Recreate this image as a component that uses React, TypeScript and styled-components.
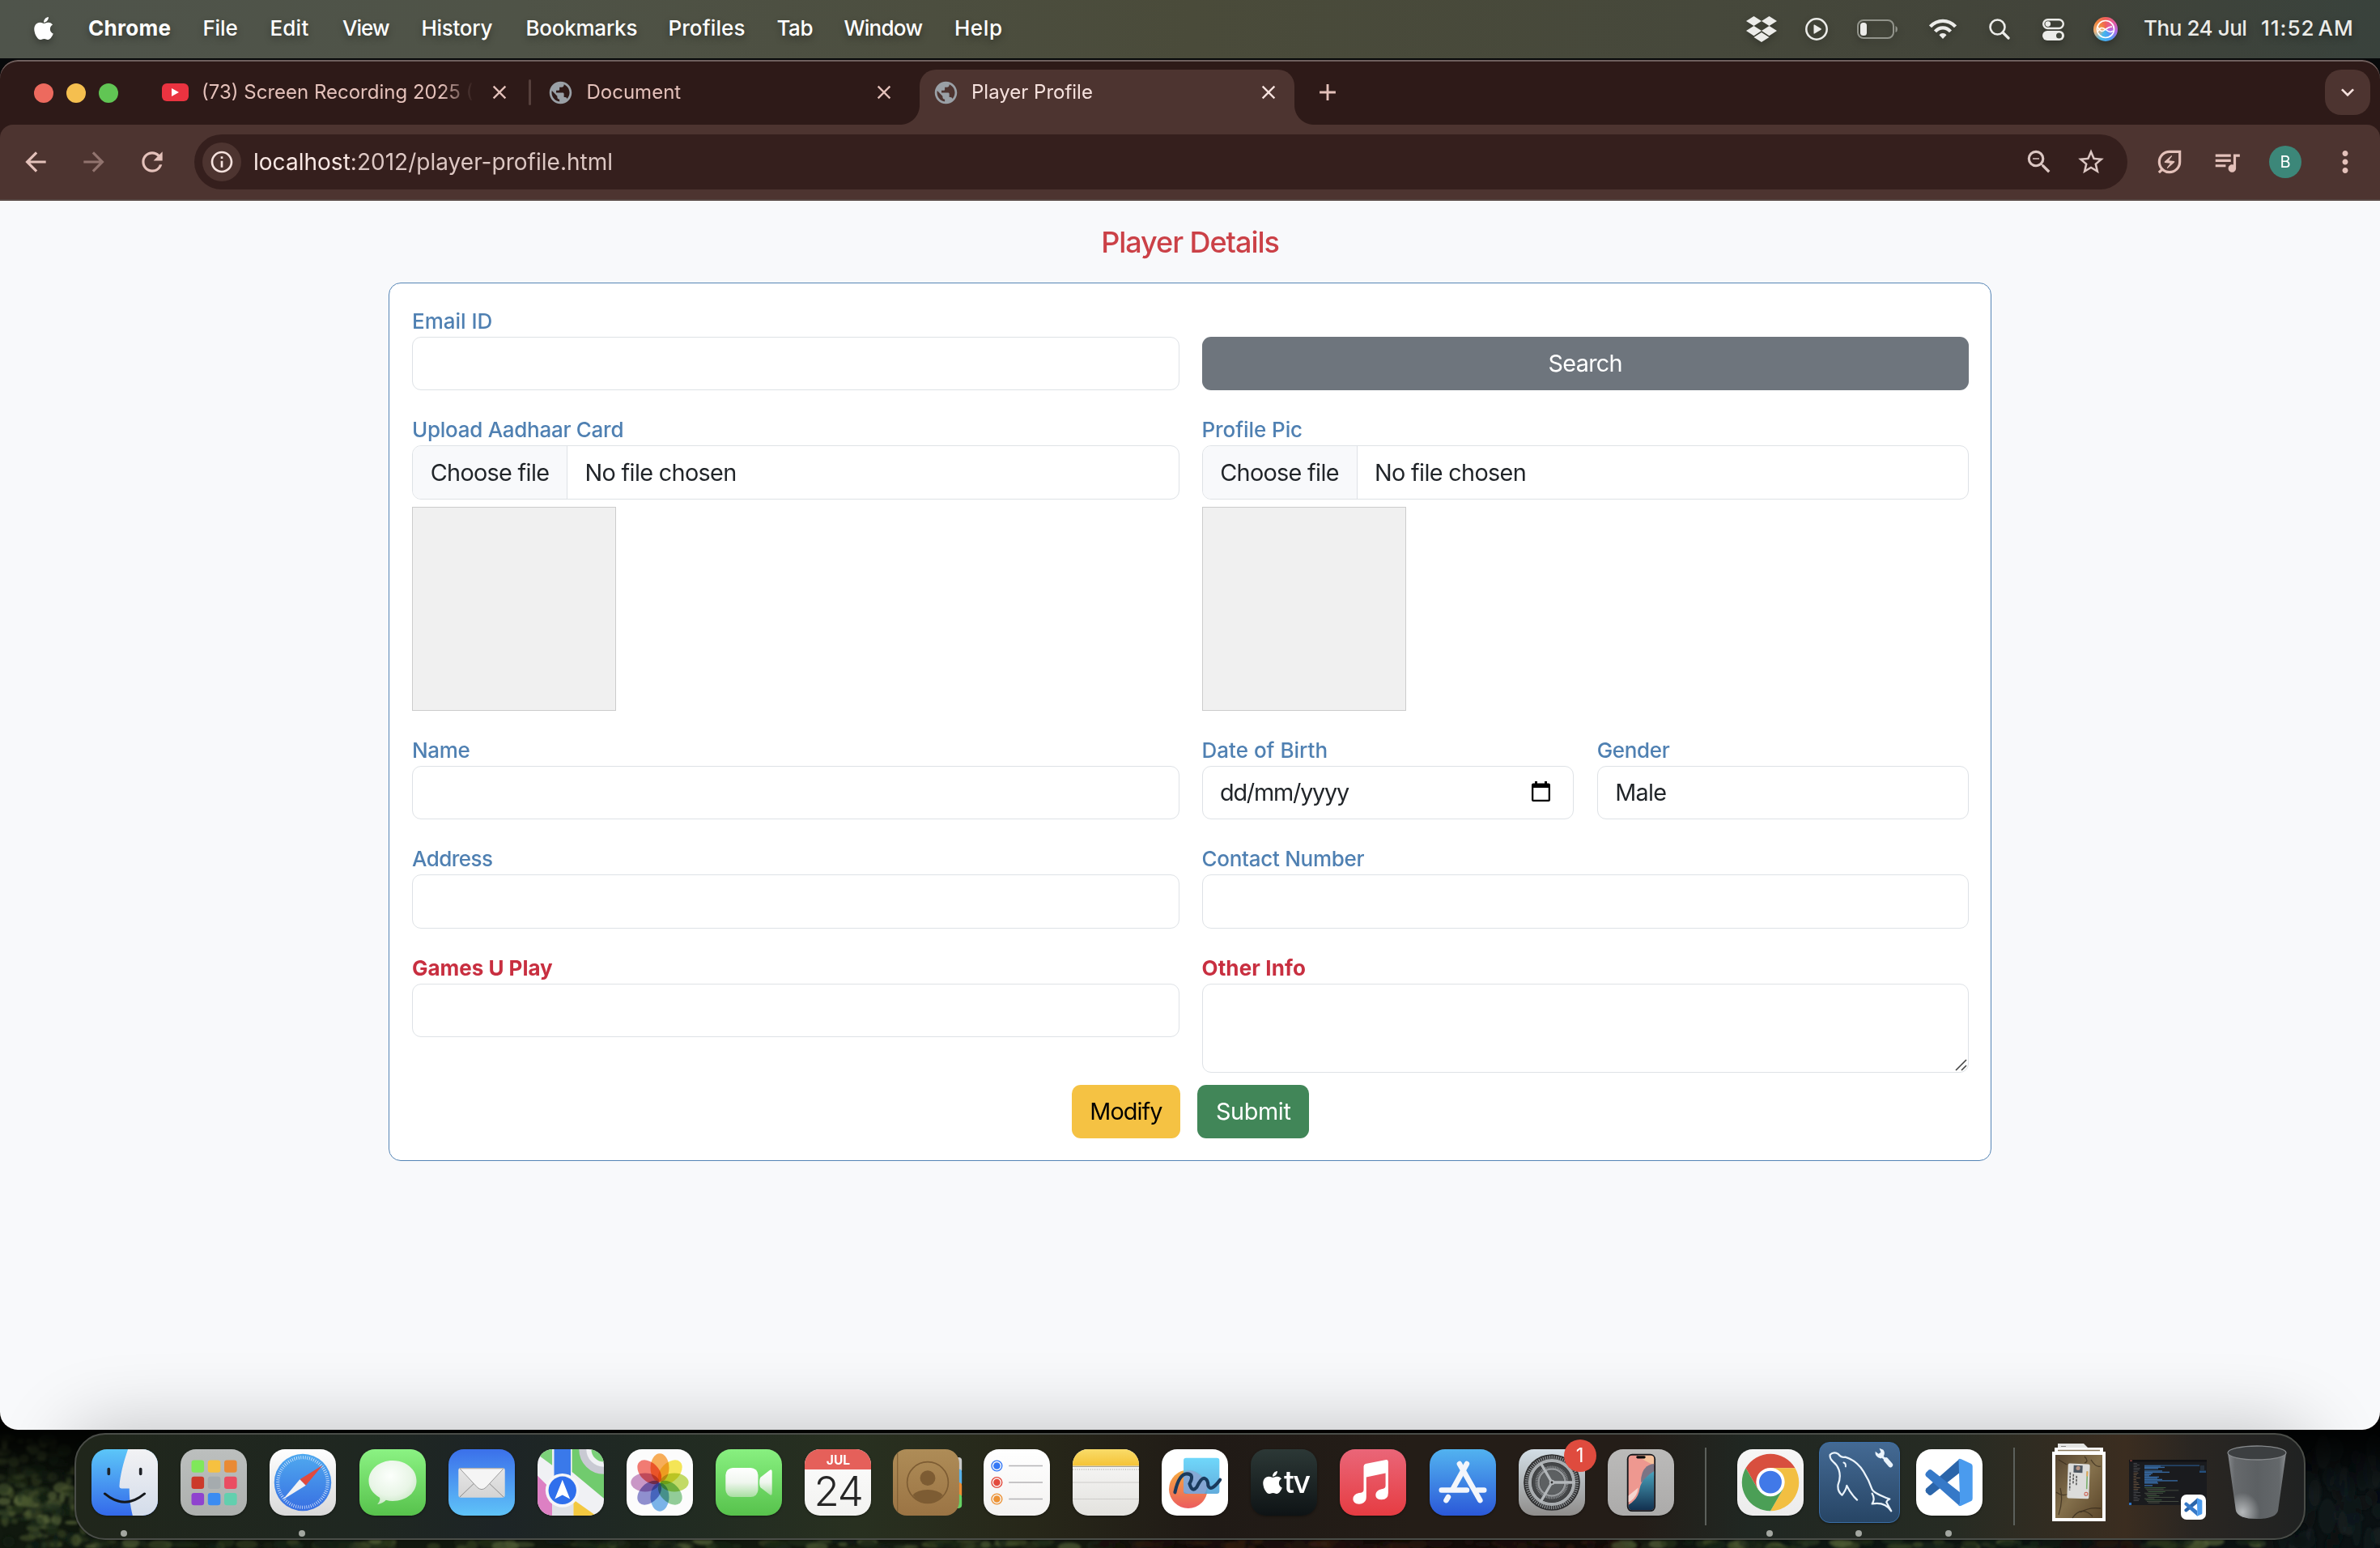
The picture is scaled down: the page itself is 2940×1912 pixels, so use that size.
import React from "react";
import styled, { createGlobalStyle } from "styled-components";
import { FaApple, FaDropbox } from "react-icons/fa";
import {
  MdAdd, MdArrowBack, MdArrowForward, MdClose, MdInfoOutline, MdKeyboardArrowDown, MdMoreVert,
  MdOutlineEnergySavingsLeaf, MdPublic, MdQueueMusic, MdRefresh, MdStarOutline, MdZoomOut,
} from "react-icons/md";

const Global = createGlobalStyle`
  *, *::before, *::after { box-sizing: border-box; }
  body { margin: 0; background: #0a0f0c; font-family: Inter, "Liberation Sans", sans-serif; }
  svg { display: block; flex: none; }
`;

const Desktop = styled.div`
  position: relative;
  width: 2940px;
  height: 1912px;
  overflow: hidden;
  display: flex;
  flex-direction: column;
  align-items: center;
  background: #07090a;
`;
const WallpaperSvg = styled.svg`
  position: absolute;
  left: 0;
  top: 0;
`;

/* ---------- menu bar ---------- */
const MenuBar = styled.header`
  position: relative;
  width: 100%;
  height: 72px;
  margin-bottom: 2px;
  padding: 0 0 3px 38px;
  display: flex;
  align-items: center;
  color: #fff;
  background: linear-gradient(90deg, #4f544b 0, #4f5347 22%, #4a4b3a 50%, #46483b 72%, #42443a 86%, #39423c 100%);
  text-shadow: 0 4px 8px rgba(0, 0, 0, 0.35);
`;
const AppleSlot = styled.div`
  width: 71px;
  filter: drop-shadow(0 4px 4px rgba(0, 0, 0, 0.3));
`;
const MenuItem = styled.span<{ $w: number; $ls: number; $bold?: boolean }>`
  width: ${(p) => p.$w}px;
  letter-spacing: ${(p) => p.$ls}px;
  font-size: 26px;
  font-weight: ${(p) => (p.$bold ? 700 : 500)};
  white-space: nowrap;
`;
const ClockTime = styled(MenuItem)`
  word-spacing: -4px;
`;
const StatusArea = styled.div`
  margin-left: auto;
  display: flex;
  align-items: center;
  color: #ecece9;
  height: 72px;
  padding-top: 3px;
`;
const StatusSlot = styled.div<{ $w: number; $gap?: number }>`
  width: ${(p) => p.$w}px;
  margin-left: ${(p) => p.$gap || 0}px;
  display: flex;
  justify-content: center;
  filter: drop-shadow(0 4px 4px rgba(0, 0, 0, 0.25));
`;
const Clock = styled.div`
  display: flex;
  margin-left: 32px;
  padding-bottom: 3px;
`;

/* ---------- browser window ---------- */
const Window = styled.section`
  position: relative;
  width: 100%;
  height: 1692px;
  border-radius: 22px;
  overflow: hidden;
  display: flex;
  flex-direction: column;
  background: #2e1a18;
  flex: none;
`;
const TabStrip = styled.div`
  height: 80px;
  padding: 12px 12px 0 42px;
  display: flex;
  align-items: flex-start;
  box-shadow: inset 0 2px 0 #6f605e;
  border-radius: 22px 22px 0 0;
  background: #2e1a18;
`;
const Lights = styled.div`
  display: flex;
  align-items: center;
  gap: 16px;
  height: 58px;
  margin-right: 36px;
`;
const Light = styled.i<{ $c: string }>`
  width: 24px;
  height: 24px;
  border-radius: 50%;
  background: ${(p) => p.$c};
`;
const Tab = styled.div<{ $w: number; $active?: boolean; $pl?: number; $pr?: number }>`
  position: relative;
  width: ${(p) => p.$w}px;
  height: ${(p) => (p.$active ? 68 : 56)}px;
  padding: 0 ${(p) => p.$pr ?? 18}px ${(p) => (p.$active ? 12 : 0)}px ${(p) => p.$pl ?? 18}px;
  display: flex;
  align-items: center;
  color: ${(p) => (p.$active ? "#f6e2de" : "#e4c1ba")};
  background: ${(p) => (p.$active ? "#4d3430" : "transparent")};
  border-radius: 20px 20px 0 0;
  ${(p) =>
    p.$active &&
    `&::before, &::after {
      content: "";
      position: absolute;
      bottom: 0;
      width: 24px;
      height: 24px;
    }
    &::before { left: -24px; background: radial-gradient(circle at 0 0, transparent 23.5px, #4d3430 24.5px); }
    &::after { right: -24px; background: radial-gradient(circle at 100% 0, transparent 23.5px, #4d3430 24.5px); }`}
`;
const TabTitle = styled.span<{ $fade?: boolean; $x: number }>`
  flex: 1;
  min-width: 0;
  margin-left: ${(p) => p.$x}px;
  margin-right: 18px;
  font-size: 24px;
  line-height: 30px;
  overflow: hidden;
  white-space: nowrap;
  ${(p) => p.$fade && "mask-image: linear-gradient(90deg, #000 88%, transparent 100%);"}
`;
const YouTubeBadge = styled.div`
  width: 33px;
  height: 22px;
  border-radius: 6px;
  background: #ea3340;
  display: flex;
  align-items: center;
  justify-content: center;
`;
const TabDivider = styled.i`
  width: 3px;
  height: 32px;
  margin-top: 12px;
  border-radius: 2px;
  background: #56403c;
`;
const NewTab = styled.div`
  height: 56px;
  margin-left: 24px;
  display: flex;
  align-items: center;
  color: #e4c1ba;
`;
const TabSearch = styled.div`
  width: 56px;
  height: 56px;
  margin-left: auto;
  border-radius: 20px;
  display: flex;
  align-items: center;
  justify-content: center;
  background: #4d3430;
  color: #f6e2de;
`;
const Toolbar = styled.div`
  height: 94px;
  padding: 0 23px 0 25px;
  display: flex;
  align-items: center;
  color: #e4c1ba;
  background: #4d3430;
  border-bottom: 2px solid #574743;
  border-radius: 16px 16px 0 0;
`;
const NavButton = styled.div<{ $dim?: boolean; $w: number }>`
  width: ${(p) => p.$w}px;
  flex: none;
  opacity: ${(p) => (p.$dim ? 0.45 : 1)};
`;
const Omnibox = styled.div`
  width: 2388px;
  height: 68px;
  flex: none;
  padding: 0 26px 0 10px;
  border-radius: 34px;
  display: flex;
  align-items: center;
  background: #351f1d;
  color: #dcc7c3;
`;
const SiteInfo = styled.div`
  width: 48px;
  height: 48px;
  margin-right: 15px;
  border-radius: 50%;
  display: flex;
  align-items: center;
  justify-content: center;
  background: #4d3430;
  color: #f6e2de;
`;
const Url = styled.span`
  flex: 1;
  font-size: 28px;
  letter-spacing: 0.02px;
  b { font-weight: 400; color: #f9e8e4; }
`;
const BoxIcons = styled.div`
  display: flex;
  align-items: center;
  gap: 26px;
`;
const ToolIcons = styled.div`
  flex: 1;
  display: flex;
  align-items: center;
  gap: 33px;
  margin-left: 33px;
`;
const Avatar = styled.div`
  width: 40px;
  height: 40px;
  border-radius: 50%;
  display: flex;
  align-items: center;
  justify-content: center;
  font-size: 20px;
  color: #fff;
  background: #3c8779;
`;

/* ---------- page ---------- */
const Page = styled.main`
  flex: 1;
  background: #f8f9fb;
  display: flex;
  flex-direction: column;
  align-items: center;
  padding-top: 30px;
`;
const Title = styled.h4`
  margin: 0 0 28px;
  font-size: 36px;
  line-height: 43px;
  font-weight: 500;
  letter-spacing: -1.05px;
  color: #cb4147;
`;
const Card = styled.form`
  width: 1980px;
  height: 1085px;
  padding: 26.5px 27px 27px 28px;
  border: 1px solid #5585b5;
  border-radius: 15px;
  background: #fff;
  display: flex;
  flex-direction: column;
`;
const Row = styled.div`
  display: grid;
  grid-template-columns: 1fr 1fr;
  column-gap: 28px;
  margin-bottom: 29px;
`;
const HalfRow = styled.div`
  display: grid;
  grid-template-columns: 1fr 1fr;
  column-gap: 29px;
`;
const Field = styled.div`
  display: flex;
  flex-direction: column;
  justify-content: flex-start;
`;
const Label = styled.label<{ $ls: number; $strong?: boolean }>`
  height: 39px;
  line-height: 39px;
  font-size: 26px;
  font-weight: ${(p) => (p.$strong ? 700 : 500)};
  letter-spacing: ${(p) => p.$ls}px;
  color: ${(p) => (p.$strong ? "#c82f40" : "#4f80b2")};
`;
const Control = styled.div<{ $tall?: boolean }>`
  position: relative;
  height: ${(p) => (p.$tall ? 110 : 66.5)}px;
  border: 1px solid #dee2e6;
  border-radius: 11px;
  background: #fff;
  overflow: hidden;
  display: flex;
  align-items: center;
  font-size: 28.8px;
  color: #212529;
`;
const FileButton = styled.span`
  width: 191px;
  height: 100%;
  display: flex;
  align-items: center;
  justify-content: center;
  letter-spacing: -0.68px;
  background: #f8f9fb;
  border-right: 1px solid #dee2e6;
`;
const Value = styled.span<{ $ls: number }>`
  margin-left: 21.5px;
  flex: 1;
  letter-spacing: ${(p) => p.$ls}px;
`;
const CalendarSlot = styled.span`
  margin-right: 28px;
  padding-bottom: 2px;
`;
const Grip = styled.svg`
  position: absolute;
  right: 1px;
  bottom: 1px;
`;
const Preview = styled.div`
  width: 252px;
  height: 252px;
  margin-top: 9px;
  border: 1px solid #ccc;
  background: #f0f0f0;
`;
const Button = styled.button<{ $bg: string; $fg: string; $w?: number; $ls: number }>`
  width: ${(p) => (p.$w ? `${p.$w}px` : "100%")};
  height: 66.5px;
  padding: 0;
  border: 0;
  border-radius: 11px;
  font: 400 28.8px Inter, "Liberation Sans", sans-serif;
  letter-spacing: ${(p) => p.$ls}px;
  background: ${(p) => p.$bg};
  color: ${(p) => p.$fg};
`;
const Actions = styled.div`
  display: flex;
  justify-content: center;
  gap: 21px;
  margin-top: -14px;
`;
const ButtonField = styled.div`
  padding-top: 39px;
`;

/* ---------- dock ---------- */
const Dock = styled.nav`
  position: relative;
  width: 2756px;
  height: 132px;
  margin-top: 4px;
  padding: 0 3px 0 5px;
  border: 2px solid #4a4d48;
  border-radius: 38px;
  display: flex;
  align-items: center;
  flex: none;
  background: linear-gradient(90deg, #20261b 0, #1f2721 13%, #1d2426 19%, #202a22 26%, #283020 35%, #272719 43%, #201a16 51%, #241d17 60%, #241d18 70%, #202722 75%, #262b23 84%, #3b2d20 92%, #2a2622 95%, #202222 100%);
  box-shadow: 0 0 90px 8px rgba(0, 0, 0, 0.22), 0 0 3px rgba(0, 0, 0, 0.8);
`;
const Cell = styled.div<{ $running?: boolean }>`
  position: relative;
  width: 110.2px;
  height: 128px;
  padding-bottom: 10px;
  display: flex;
  align-items: center;
  justify-content: center;
  ${(p) =>
    p.$running &&
    `&::after {
      content: "";
      position: absolute;
      left: 50%;
      bottom: 2px;
      width: 8px;
      height: 8px;
      margin-left: -5px;
      border-radius: 50%;
      background: #a3a7a1;
    }`}
`;
const Tile = styled.div<{ $bg: string }>`
  width: 82px;
  height: 82px;
  border-radius: 19px;
  overflow: hidden;
  background: ${(p) => p.$bg};
  box-shadow: 0 1px 3px rgba(0, 0, 0, 0.4);
`;
const CalendarTile = styled(Tile)`
  display: flex;
  flex-direction: column;
  align-items: center;
`;
const CalMonth = styled.div`
  width: 100%;
  height: 25px;
  line-height: 27px;
  text-align: center;
  font-size: 15.5px;
  font-weight: 700;
  color: #fff;
  background: #e5605a;
`;
const CalDay = styled.div`
  line-height: 53px;
  font-size: 51px;
  font-weight: 300;
  letter-spacing: -1.4px;
  color: #262626;
`;
const TvTile = styled(Tile)`
  display: flex;
  align-items: center;
  justify-content: center;
  color: #fff;
  font-size: 38px;
  font-weight: 500;
  letter-spacing: -2.4px;
`;
const TvText = styled.span`
  margin-left: -2px;
  padding-bottom: 2px;
`;
const Separator = styled.i`
  width: 2px;
  height: 96px;
  margin: 0 24px;
  background: #5c605b;
`;
const Badge = styled.span`
  position: absolute;
  left: 70px;
  top: 6px;
  width: 40px;
  height: 40px;
  border-radius: 50%;
  line-height: 40px;
  text-align: center;
  font-size: 24px;
  color: #fff;
  background: #df4b3e;
`;
const WindowThumb = styled.div`
  position: relative;
  width: 96px;
  height: 56px;
`;
const ThumbBadge = styled.div`
  position: absolute;
  right: 1px;
  bottom: -18px;
  width: 31px;
  height: 31px;
  border-radius: 7px;
  background: #fff;
`;

/* deterministic pseudo random numbers for the foliage */
const rng = (seed: number) => () => {
  seed = (seed * 1664525 + 1013904223) % 4294967296;
  return seed / 4294967296;
};
function Wallpaper() {
  const r = rng(11);
  const leaves: React.ReactElement[] = [];
  const greens = ["#2c3a1c", "#48552c", "#1b2a18", "#5c6a3c", "#23331f", "#131f16"];
  const darks = ["#141b1d", "#101a1c", "#1b2426", "#0b1113"];
  for (let i = 0; i < 240; i++)
    leaves.push(<ellipse key={`l${i}`} cx={r() * 130} cy={1775 + r() * 137} rx={3 + r() * 8} ry={2 + r() * 6} fill={greens[Math.floor(r() * 6)]} opacity={0.25 + r() * 0.5} />);
  for (let i = 0; i < 330; i++) {
    const x = 90 + r() * 2700;
    const brown = (x > 1360 && x < 2000) || (x > 2555 && x < 2640);
    leaves.push(<ellipse key={`b${i}`} cx={x} cy={1902 + r() * 10} rx={5 + r() * 12} ry={2 + r() * 5} fill={brown ? ["#3a2013", "#1b0f0a", "#241510"][i % 3] : greens[i % 6]} opacity={0.3 + r() * 0.5} />);
  }
  for (let i = 0; i < 90; i++)
    leaves.push(<ellipse key={`r${i}`} cx={2800 + r() * 140} cy={1790 + r() * 122} rx={4 + r() * 8} ry={6 + r() * 16} fill={darks[i % 4]} opacity={0.3 + r() * 0.4} />);
  return (
    <WallpaperSvg width="2940" height="1912" viewBox="0 0 2940 1912">
      <defs>
        <linearGradient id="wshade" x1="0" y1="0" x2="0" y2="1"><stop offset="0" stopColor="#000" stopOpacity="1" /><stop offset="0.2" stopColor="#000" stopOpacity="0.75" /><stop offset="0.6" stopColor="#000" stopOpacity="0" /></linearGradient>
        <linearGradient id="wbase" x1="0" y1="0" x2="1" y2="0"><stop offset="0" stopColor="#11190f" /><stop offset="0.45" stopColor="#161d10" /><stop offset="0.5" stopColor="#150c08" /><stop offset="0.68" stopColor="#150d09" /><stop offset="0.72" stopColor="#0f1a14" /><stop offset="1" stopColor="#0b1113" /></linearGradient>
        <filter id="wblur"><feGaussianBlur stdDeviation="1.6" /></filter>
      </defs>
      <rect y="1700" width="2940" height="212" fill="url(#wbase)" />
      <g filter="url(#wblur)">{leaves}</g>
      <rect y="1750" width="2940" height="162" fill="url(#wshade)" />
    </WallpaperSvg>
  );
}

const Art = ({ children, size = 82 }: { children: React.ReactNode; size?: number }) => (
  <svg width={size} height={size} viewBox="0 0 100 100">{children}</svg>
);

const VsCodeArt = ({ size = 82 }: { size?: number }) => (
  <Art size={size}>
    <path d="M66 14 15 59Q13 62 15 65L19 69Q21 70 23 69L66 35Z" fill="#2b65aa" />
    <path d="M66 86 15 41Q13 38 15 35L19 31Q21 30 23 31L66 65Z" fill="#3679c8" />
    <path d="M64 15Q66 14 68 15L83 22Q85 23 85 26V74Q85 77 83 78L68 85Q66 86 64 85L66 80Z" fill="#4a9bee" />
  </Art>
);

const petals = ["#f5992f", "#f2df2c", "#b3d13f", "#76c07e", "#5aa0e2", "#7373c2", "#bb7db8", "#ee5a50"];
const Blend = styled.g`
  isolation: isolate;
  ellipse { mix-blend-mode: multiply; }
`;

const SiriOrb = styled.div`
  width: 30px;
  height: 30px;
  border-radius: 50%;
  display: flex;
  align-items: center;
  justify-content: center;
  background: conic-gradient(#f0605a, #e35ba0, #b06be8, #4aa0f5, #45b8ea, #efb37a, #f0863e, #f0605a);
`;

const Finder = () => (
  <Tile $bg="linear-gradient(#5cc6f8, #3469ea)">
    <Art>
      <path d="M55 0C48 20 43 40 42 56Q42 59 45 59H57C57 75 59 88 62 100H100V0Z" fill="url(#fw)" />
      <defs><linearGradient id="fw" x1="0" y1="0" x2="0" y2="1"><stop stopColor="#f2f2f4" /><stop offset="1" stopColor="#d3dcea" /></linearGradient></defs>
      <path d="M26 30V37M74 30V37" stroke="#1e2227" strokeWidth="4.5" strokeLinecap="round" />
      <path d="M20 67Q50 92 80 67" fill="none" stroke="#15181c" strokeWidth="3.6" strokeLinecap="round" />
    </Art>
  </Tile>
);
const Launchpad = () => (
  <Tile $bg="linear-gradient(#bcbfbe, #adb0ae)">
    <Art>
      {["#7fe85a", "#f6c140", "#e98a35", "#cc3a2a", "#a5abae", "#ea4d62", "#8f43cf", "#3b8cf2", "#62cfae"].map((c, i) => (
        <rect key={i} x={16.5 + (i % 3) * 24.7} y={16.5 + Math.floor(i / 3) * 24.7} width="19" height="18.5" rx="4" fill={c} />
      ))}
    </Art>
  </Tile>
);
const Safari = () => (
  <Tile $bg="linear-gradient(#fff, #d9d9d9)">
    <Art>
      <defs><linearGradient id="sf" x1="0" y1="0" x2="0" y2="1"><stop stopColor="#4fa9ef" /><stop offset="1" stopColor="#386fe2" /></linearGradient></defs>
      <circle cx="50" cy="50" r="43" fill="url(#sf)" />
      <circle cx="50" cy="50" r="37.5" fill="none" stroke="#fff" strokeWidth="5" strokeDasharray="0.9 2.37" opacity="0.85" />
      <path d="M80 24 45.5 45.5 54.5 54.5Z" fill="#e04a3e" />
      <path d="M20 76 45.5 45.5 54.5 54.5Z" fill="#f2f2f4" />
    </Art>
  </Tile>
);
const Messages = () => (
  <Tile $bg="linear-gradient(#8bf283, #57c24c)">
    <Art>
      <defs><radialGradient id="ms" cx="0.45" cy="0.35" r="0.75"><stop stopColor="#fcfffc" /><stop offset="0.6" stopColor="#e8f5e6" /><stop offset="1" stopColor="#bfe3ba" /></radialGradient></defs>
      <path d="M50 17C70 17 86 30 86 48S70 78 50 78Q45 78 40 76.500Q36 81 27 83Q32 78 30.500 73C20 67 14 58 14 48 14 30 30 17 50 17Z" fill="url(#ms)" />
    </Art>
  </Tile>
);
const Mail = () => (
  <Tile $bg="linear-gradient(#3b70ea, #5fc3f8)">
    <Art>
      <defs><linearGradient id="ml" x1="0" y1="0" x2="0" y2="1"><stop stopColor="#e6e6e6" /><stop offset="1" stopColor="#d4d4d4" /></linearGradient></defs>
      <rect x="15" y="28" width="70" height="45" rx="4" fill="url(#ml)" />
      <path d="M17 72 40 50M83 72 60 50" stroke="#8b8b8b" strokeWidth="1.2" />
      <path d="M17 29H83L57 57Q50 64 43 57Z" fill="#f5f5f5" stroke="#9a9a9a" strokeWidth="1.2" />
    </Art>
  </Tile>
);
const Maps = () => (
  <Tile $bg="#f0f1f4">
    <Art>
      <path d="M0 8 22 24V0H0Z" fill="#7cd17a" />
      <path d="M52 0H68Q70 30 100 34V74L52 34Z" fill="#71cb6e" />
      <circle cx="100" cy="0" r="32" fill="none" stroke="#c9cad3" strokeWidth="11" />
      <circle cx="100" cy="0" r="19" fill="#7ad078" />
      <path d="M0 40 22 62V100H0Z" fill="#dd80c3" />
      <path d="M54 76 88 100H54Z" fill="#f3c840" />
      <path d="M22 60H54V100H22Z" fill="#dfe1e6" />
      <rect x="25" y="0" width="25" height="60" fill="#3a79ea" />
      <circle cx="37.500" cy="62" r="25.500" fill="#f6f6f8" />
      <circle cx="37.500" cy="62" r="21" fill="#2f6fec" />
      <path d="M37.500 46 49 75 37.500 69 26 75Z" fill="#fff" />
    </Art>
  </Tile>
);
const Photos = () => (
  <Tile $bg="#fcfcfc">
    <Art>
      <Blend>
        {petals.map((c, i) => (
          <ellipse key={c} cx="50" cy="28" rx="14" ry="21.500" fill={c} opacity="0.8" transform={`rotate(${i * 45} 50 50)`} />
        ))}
      </Blend>
    </Art>
  </Tile>
);
const FaceTime = () => (
  <Tile $bg="linear-gradient(#88f080, #57c24c)">
    <Art>
      <defs><linearGradient id="ft" x1="0" y1="0" x2="0" y2="1"><stop stopColor="#fff" /><stop offset="0.5" stopColor="#f0f6ef" /><stop offset="1" stopColor="#a9dfa2" /></linearGradient></defs>
      <rect x="15" y="28" width="49" height="44" rx="11" fill="url(#ft)" />
      <path d="M68 42 81 32Q85 29 85 34V66Q85 71 81 68L68 58Q66 56 66 50T68 42Z" fill="url(#ft)" />
    </Art>
  </Tile>
);
const Contacts = () => (
  <svg width="86" height="82" viewBox="0 0 105 100">
    <rect x="86" y="12" width="18" height="24" rx="5" fill="#c9c9c9" /><rect x="86" y="30" width="18" height="26" rx="5" fill="#5ab2ea" />
    <rect x="86" y="50" width="18" height="24" rx="5" fill="#ee8d33" /><rect x="86" y="68" width="18" height="21" rx="5" fill="#66d263" />
    <defs><linearGradient id="ct" x1="0" y1="0" x2="0" y2="1"><stop stopColor="#ae8c57" /><stop offset="1" stopColor="#9b7444" /></linearGradient></defs>
    <rect width="100" height="100" rx="21" fill="url(#ct)" />
    <path d="M7 6V94" stroke="#7d5d33" strokeWidth="1.300" />
    <circle cx="52.500" cy="50" r="31" fill="none" stroke="#7d5c33" strokeWidth="2" />
    <circle cx="52.500" cy="43.500" r="11.500" fill="#7d5c33" />
    <path d="M30 69Q37 61 52.500 61T75 69Q67 81 52.500 81T30 69Z" fill="#7d5c33" />
  </svg>
);
const Reminders = () => (
  <Tile $bg="linear-gradient(#fff, #f3f2f1)">
    <Art>
      {["#3478f6", "#e34b3e", "#ec9235"].map((c, i) => (
        <g key={c} transform={`translate(0 ${25 + i * 25})`}>
          <circle cx="20" r="7.800" fill="none" stroke={c} strokeWidth="1.700" /><circle cx="20" r="5.200" fill={c} />
          <path d="M38 0H89" stroke="#b4b3b6" strokeWidth="1.600" />
        </g>
      ))}
    </Art>
  </Tile>
);
const Notes = () => (
  <Tile $bg="linear-gradient(#fafafa, #e3e2de)">
    <Art>
      <defs><linearGradient id="nt" x1="0" y1="0" x2="0" y2="1"><stop stopColor="#f9dc6a" /><stop offset="1" stopColor="#f5c336" /></linearGradient></defs>
      <rect width="100" height="25" fill="url(#nt)" />
      <path d="M0 26H100" stroke="#aaa69a" strokeWidth="1.500" />
      <path d="M0 30.500H100" stroke="#bcbbb8" strokeWidth="2" strokeDasharray="1.300 2" />
      <path d="M0 50H100M0 75H100" stroke="#cdccca" strokeWidth="1.300" />
    </Art>
  </Tile>
);
const Freeform = () => (
  <Tile $bg="#fff">
    <Art>
      <defs>
        <linearGradient id="fo" x1="0" y1="0" x2="0" y2="1"><stop stopColor="#f5ab3f" /><stop offset="1" stopColor="#ec5c5e" /></linearGradient>
        <linearGradient id="fb" x1="0" y1="0" x2="0" y2="1"><stop stopColor="#63d4fa" /><stop offset="1" stopColor="#55a5d9" /></linearGradient>
      </defs>
      <circle cx="40" cy="60" r="29" fill="url(#fo)" />
      <rect x="33" y="13" width="54" height="54" rx="4" fill="url(#fb)" opacity="0.92" />
      <path d="M40 67H64Q69 62 68.500 54 60 35 43 32 34 33 33 36V64Z" fill="#8fa3d2" opacity="0.75" />
      <path d="M20 65Q26 37 38 37T42 52Q46 66 53 57 60 42 65 44T70 55Q74 65 88 46" fill="none" stroke="#1a3a5c" strokeWidth="5" strokeLinecap="round" />
    </Art>
  </Tile>
);
const Music = () => (
  <Tile $bg="linear-gradient(#ea6678, #e63c42)">
    <Art>
      <path d="M36 26Q36 23 39 22L70 16Q73 15.500 73 19V66Q73 76 63 76 54 76 54 69T63 60Q69 60 69 55V36L40 42V72Q40 82 29 82.500 20 82 20 75T29 66Q36 66 36 61Z" fill="#fff" />
    </Art>
  </Tile>
);
const AppStore = () => (
  <Tile $bg="linear-gradient(#52b3f0, #2b58d8)">
    <Art>
      <g stroke="#f3f6fb" strokeWidth="8" strokeLinecap="round" fill="none">
        <path d="M45 22 76 77" /><path d="M56 22 35 60" /><path d="M18 61.500H56M72 61.500H82" /><path d="M28 72 25 77" />
      </g>
    </Art>
  </Tile>
);
const Settings = () => (
  <Tile $bg="linear-gradient(#d3dee6, #8f8d8b)">
    <Art>
      <circle cx="50" cy="50" r="42.500" fill="#2c2c2d" />
      <circle cx="50" cy="50" r="38" fill="none" stroke="#8b8f92" strokeWidth="5" strokeDasharray="1.600 1.700" />
      <circle cx="50" cy="50" r="33" fill="none" stroke="#a9adb0" strokeWidth="5" />
      <circle cx="50" cy="50" r="30" fill="#444648" />
      <circle cx="50" cy="50" r="23" fill="none" stroke="#8b8e91" strokeWidth="4" strokeDasharray="1.300 1.100" />
      <circle cx="50" cy="50" r="20" fill="none" stroke="#96999c" strokeWidth="3" />
      <circle cx="50" cy="50" r="18" fill="#5d6062" />
      <path d="M50 50H84M50 50 33 20.500M50 50 33 79.500" stroke="#b3b7ba" strokeWidth="4" />
      <circle cx="50" cy="50" r="4" fill="#b3b7ba" /><circle cx="50" cy="50" r="1.700" fill="#333" />
    </Art>
  </Tile>
);
const Phone = () => (
  <Tile $bg="linear-gradient(#bbbab9, #acabaa)">
    <Art>
      <defs><linearGradient id="ph" x1="0" y1="0" x2="0" y2="1"><stop stopColor="#4aa3bd" /><stop offset="1" stopColor="#12304f" /></linearGradient>
        <clipPath id="pc"><rect x="31" y="9" width="39" height="83" rx="6" /></clipPath></defs>
      <rect x="29" y="7" width="43" height="87" rx="8" fill="#14171b" />
      <g clipPath="url(#pc)">
        <rect x="31" y="9" width="39" height="83" fill="#ee9890" />
        <path d="M45 9H70V24Q55 18 45 9Z" fill="#f5c09a" />
        <path d="M70 22Q50 24 50 50L70 40Z" fill="#7c7485" />
        <path d="M31 92V80Q44 74 46 58L31 70Z" fill="#f5d6cf" />
        <path d="M70 33Q50 45 48 60T31 84V92H70Z" fill="url(#ph)" />
      </g>
      <rect x="43" y="10" width="14" height="4" rx="2" fill="#0b0b0c" />
    </Art>
  </Tile>
);
const ChromeApp = () => (
  <Tile $bg="linear-gradient(#f6f6f6, #ececec)">
    <Art>
      <path d="M12.800 28.500A43 43 0 0 1 87.200 28.500H50L31.400 60.750Z" fill="#d84f3f" />
      <path d="M87.200 28.500A43 43 0 0 1 50 93L68.600 60.750 50 28.500Z" fill="#f2bf42" />
      <path d="M50 93A43 43 0 0 1 12.800 28.500L31.400 60.750 50 66 68.600 60.750Z" fill="#4b9f56" />
      <circle cx="50" cy="49.500" r="21.500" fill="#fff" /><circle cx="50" cy="49.500" r="17" fill="#4179e8" />
    </Art>
  </Tile>
);
const WorkbenchTile = styled(Tile)`
  width: 100px;
  height: 100px;
  border-radius: 13px;
  border: 1px solid #3a6ea8;
`;
const Workbench = () => (
  <WorkbenchTile $bg="linear-gradient(#446a94, #274565)">
    <Art size={98}>
      <path d="M47 72Q40 66 34 54 33 60 28 66 22 61 23 53 27 43 24 34 22 28 17 24 12 20 13 15 17 11 23 14 27 19 32 18 46 22 55 36 62 47 66 59 69 64 88 71 84 73 84 75L90 86Q82 74 66 77 70 71 66 64" fill="none" stroke="#eaf3fb" strokeWidth="2.300" strokeLinejoin="round" strokeLinecap="round" />
      <path d="M30 25Q33 26 32.500 30" fill="none" stroke="#eaf3fb" strokeWidth="2" strokeLinecap="round" />
      <path d="M75 7 77 12 74 14 70 11Q69 18 77 20L80 18Q83 13 80 9Z" fill="#eaf3fb" />
      <path d="M79 18 83 21" stroke="#eaf3fb" strokeWidth="3" /><path d="M83.500 21.500 89 28" stroke="#eaf3fb" strokeWidth="6" strokeLinecap="round" />
    </Art>
  </WorkbenchTile>
);
const PhotoStack = () => (
  <svg width="66" height="96" viewBox="0 0 66 96">
    <path d="M7 0H39L45 6V10H7Z" fill="#e4e4e2" /><path d="M11 3.500H17" stroke="#888" />
    <rect x="3" y="5" width="60" height="20" fill="#fff" /><path d="M7 8.500H59" stroke="#8a7a5c" strokeWidth="1.500" />
    <rect y="10" width="66" height="86" fill="#fff" />
    <defs><linearGradient id="pt" x1="0" y1="0" x2="1" y2="1"><stop stopColor="#54432f" /><stop offset="0.5" stopColor="#84704c" /><stop offset="1" stopColor="#5a4529" /></linearGradient></defs>
    <rect x="4" y="14" width="58" height="78" fill="url(#pt)" />
    <path d="M5 60Q12 66 20 62M8 88Q14 70 10 55M35 85Q46 78 60 80M25 92Q36 76 50 90M48 20Q54 30 60 28M8 20 18 26M40 16Q46 22 40 24" fill="none" stroke="#33281a" strokeWidth="1.300" opacity="0.7" />
    <g transform="rotate(2 33 47)">
      <rect x="19" y="25" width="27" height="43" rx="2" fill="#dcdcda" />
      <rect x="26" y="27" width="11" height="9" fill="#4d5660" /><circle cx="31.500" cy="30.500" r="2.600" fill="#b89484" />
      <path d="M22 36V58M26 38V50M30 40V52" stroke="#5a5a5a" strokeWidth="1.600" strokeDasharray="3 1.200" />
      <path d="M43 34V56" stroke="#79b06c" strokeWidth="1.600" /><path d="M43 34V40" stroke="#e8a252" strokeWidth="1.800" />
      <circle cx="42.500" cy="62" r="2" fill="none" stroke="#cc5a4a" />
    </g>
  </svg>
);
const CodeThumb = () => {
  const r = rng(5);
  return (
    <svg width="96" height="56" viewBox="0 0 96 56">
      <rect width="96" height="56" fill="#1a1b1e" />
      <rect width="96" height="2.500" fill="#101114" /><path d="M1 1.200H4" stroke="#c0564c" strokeWidth="1" />
      {Array.from({ length: 24 }, (_, i) => <rect key={i} x="5.500" y={4 + i * 2} width={3 + r() * 6} height="0.900" fill={i > 5 && i < 17 ? "#6b5640" : "#4a4b4e"} />)}
      <rect x="19" y="6.500" width="68" height="1.300" fill="#27507f" />
      {[20, 25, 17, 0, 22, 31, 10, 8, 6, 18, 16, 22, 41, 16, 17, 0, 10].map((w, i) => <rect key={i} x="19" y={7.2 + i * 1.5} width={w} height="1.400" fill="#36689f" />)}
      {Array.from({ length: 12 }, (_, i) => <rect key={i} x={19 + (i % 4) * 1.5} y={34 + i * 1.7} width={6 + r() * 34} height="0.900" fill={i % 3 ? "#4a5145" : "#3d5f3d"} />)}
      <rect x="87" y="13.500" width="8" height="2.500" fill="#234f7d" /><rect x="88" y="7" width="5" height="6" fill="#26303b" />
      <rect y="53" width="3" height="3" fill="#2f73c4" />
    </svg>
  );
};
const Trash = () => (
  <svg width="74" height="92" viewBox="0 0 74 92">
    <defs>
      <linearGradient id="ts" x1="0" y1="0" x2="1" y2="0"><stop stopColor="#85888b" /><stop offset="0.12" stopColor="#66696c" /><stop offset="0.5" stopColor="#5c6063" /><stop offset="0.88" stopColor="#64686b" /><stop offset="1" stopColor="#8a8d90" /></linearGradient>
      <radialGradient id="tg" cx="0.25" cy="0.9" r="0.3"><stop stopColor="#b5b8ba" /><stop offset="1" stopColor="#b5b8ba" stopOpacity="0" /></radialGradient>
    </defs>
    <path d="M1 10 11 81Q14 91 37 91T63 81L73 10Z" fill="url(#ts)" />
    <path d="M1 10 11 81Q14 91 37 91T63 81L73 10Z" fill="url(#tg)" />
    <ellipse cx="37" cy="9.500" rx="36" ry="8.500" fill="#3c3f41" stroke="#85888b" strokeWidth="1.300" />
  </svg>
);

const menus: [string, number, number][] = [
  ["File", 83, -0.14], ["Edit", 89.5, 0.23], ["View", 97.5, -0.94], ["History", 129, -0.28], ["Bookmarks", 176, -0.23],
  ["Profiles", 134, 0.11], ["Tab", 83, -0.42], ["Window", 136.5, -0.72], ["Help", 60, 0.61],
];

function StatusIcons() {
  return (
    <>
      <StatusSlot $w={38}><FaDropbox size={38} /></StatusSlot>
      <StatusSlot $w={28} $gap={35}>
        <svg width="28" height="28" viewBox="0 0 28 28"><circle cx="14" cy="14" r="12.700" fill="none" stroke="currentColor" strokeWidth="2.500" /><path d="M10.500 9V19Q10.500 20 11.500 19.400L19.500 14.700Q20.500 14 19.500 13.300L11.500 8.600Q10.500 8 10.500 9Z" fill="currentColor" /></svg>
      </StatusSlot>
      <StatusSlot $w={50} $gap={36}>
        <svg width="50" height="24" viewBox="0 0 50 24"><rect x="1" y="1" width="44" height="22" rx="7" fill="none" stroke="#92948b" strokeWidth="2" /><rect x="4" y="4" width="8" height="16" rx="3.500" fill="currentColor" /><path d="M47.500 8Q50 9 50 12T47.500 16Z" fill="#92948b" /></svg>
      </StatusSlot>
      <StatusSlot $w={34} $gap={39}>
        <svg width="34" height="26" viewBox="0 0 34 26"><g fill="none" stroke="currentColor" strokeWidth="4.200"><path d="M1.500 9.800Q8 2.800 17 2.800T32.500 9.800" /><path d="M7.500 15.800Q11.500 11.300 17 11.300T26.500 15.800" /></g><path d="M17 18Q20 18 21.500 20.200L17 25 12.500 20.200Q14 18 17 18Z" fill="currentColor" /></svg>
      </StatusSlot>
      <StatusSlot $w={26} $gap={40}>
        <svg width="26" height="26" viewBox="0 0 26 26"><circle cx="10.500" cy="10.500" r="9" fill="none" stroke="currentColor" strokeWidth="2.600" /><path d="M17 17 24 24" stroke="currentColor" strokeWidth="3.200" strokeLinecap="round" /></svg>
      </StatusSlot>
      <StatusSlot $w={27} $gap={40}>
        <svg width="27" height="27" viewBox="0 0 27 27"><rect x="1.200" y="1.200" width="24.600" height="10.800" rx="5.400" fill="none" stroke="currentColor" strokeWidth="2.400" /><circle cx="6.800" cy="6.600" r="3.300" fill="currentColor" /><rect y="15" width="27" height="12" rx="6" fill="currentColor" /><circle cx="20.500" cy="21" r="3.500" fill="#42463c" /></svg>
      </StatusSlot>
      <StatusSlot $w={30} $gap={36}>
        <SiriOrb><svg width="24" height="24" viewBox="0 0 24 24" fill="none" stroke="#fff"><circle cx="12" cy="12" r="10.500" strokeWidth="1.700" /><path d="M3 14.500Q6 7.500 12 12.500T21 14M3 10Q6 17 11 13T20 9" strokeWidth="1.500" /></svg></SiriOrb>
      </StatusSlot>
      <Clock>
        <MenuItem $w={145} $ls={-0.45}>Thu 24 Jul</MenuItem>
        <ClockTime $w={147} $ls={1}>11:52 AM</ClockTime>
      </Clock>
    </>
  );
}

function TextField({ label, ls, strong, children, tall }: { label: string; ls: number; strong?: boolean; tall?: boolean; children?: React.ReactNode }) {
  return (
    <Field>
      <Label $ls={ls} $strong={strong}>{label}</Label>
      <Control $tall={tall}>{children}</Control>
    </Field>
  );
}
function FileField({ label, ls }: { label: string; ls: number }) {
  return (
    <Field>
      <Label $ls={ls}>{label}</Label>
      <Control>
        <FileButton>Choose file</FileButton>
        <Value $ls={-0.66}>No file chosen</Value>
      </Control>
      <Preview />
    </Field>
  );
}

const dockApps: React.ReactElement[] = [
  <Finder />, <Launchpad />, <Safari />, <Messages />, <Mail />, <Maps />, <Photos />, <FaceTime />,
  <CalendarTile $bg="linear-gradient(#fdfdfd, #f2f2f0)"><CalMonth>JUL</CalMonth><CalDay>24</CalDay></CalendarTile>,
  <Contacts />, <Reminders />, <Notes />, <Freeform />,
  <TvTile $bg="linear-gradient(#2c3836, #0e1315)"><FaApple size={32} /><TvText>tv</TvText></TvTile>,
  <Music />, <AppStore />, <Settings />, <Phone />,
];

export default function App() {
  return (
    <Desktop>
      <Global />
      <Wallpaper />
      <MenuBar>
        <AppleSlot><FaApple size={32} /></AppleSlot>
        <MenuItem $w={141.4} $ls={0.29} $bold>Chrome</MenuItem>
        {menus.map(([t, w, ls]) => <MenuItem key={t} $w={w} $ls={ls}>{t}</MenuItem>)}
        <StatusArea><StatusIcons /></StatusArea>
      </MenuBar>

      <Window>
        <TabStrip>
          <Lights><Light $c="#ed6a5e" /><Light $c="#f5bf4f" /><Light $c="#61c554" /></Lights>
          <Tab $w={470.5} $pr={22}>
            <YouTubeBadge><svg width="9" height="10" viewBox="0 0 9 10"><path d="M0 0 9 5 0 10Z" fill="#fff" /></svg></YouTubeBadge>
            <TabTitle $x={16} $fade>(73) Screen Recording 2025 (</TabTitle>
            <MdClose size={28} />
          </Tab>
          <TabDivider />
          <Tab $w={480} $pl={20} $pr={30}>
            <MdPublic size={33} color="#9aa0a6" />
            <TabTitle $x={16}>Document</TabTitle>
            <MdClose size={28} />
          </Tab>
          <Tab $w={463.5} $pl={16} $active>
            <MdPublic size={33} color="#9aa0a6" />
            <TabTitle $x={15.5}>Player Profile</TabTitle>
            <MdClose size={28} />
          </Tab>
          <NewTab><MdAdd size={34} /></NewTab>
          <TabSearch><MdKeyboardArrowDown size={32} /></TabSearch>
        </TabStrip>
        <Toolbar>
          <NavButton $w={72}><MdArrowBack size={38} /></NavButton>
          <NavButton $w={72} $dim><MdArrowForward size={38} /></NavButton>
          <NavButton $w={71}><MdRefresh size={38} /></NavButton>
          <Omnibox>
            <SiteInfo><MdInfoOutline size={32} /></SiteInfo>
            <Url><b>localhost</b>:2012/player-profile.html</Url>
            <BoxIcons><MdZoomOut size={38} /><MdStarOutline size={38} /></BoxIcons>
          </Omnibox>
          <ToolIcons>
            <MdOutlineEnergySavingsLeaf size={38} />
            <MdQueueMusic size={38} />
            <Avatar>B</Avatar>
            <MdMoreVert size={42} />
          </ToolIcons>
        </Toolbar>
        <Page>
          <Title>Player Details</Title>
          <Card>
            <Row>
              <TextField label="Email ID" ls={-0.01} />
              <ButtonField><Button type="button" $bg="#6e757d" $fg="#fff" $ls={-0.71}>Search</Button></ButtonField>
            </Row>
            <Row>
              <FileField label="Upload Aadhaar Card" ls={-0.28} />
              <FileField label="Profile Pic" ls={-0.08} />
            </Row>
            <Row>
              <TextField label="Name" ls={-0.37} />
              <HalfRow>
                <TextField label="Date of Birth" ls={0.01}>
                  <Value $ls={-1.22}>dd/mm/yyyy</Value>
                  <CalendarSlot>
                    <svg width="23" height="25" viewBox="0 0 23 25"><path d="M4 0H7V2.500H16V0H19V2.500H21Q23 2.500 23 4.500V23Q23 25 21 25H2Q0 25 0 23V4.500Q0 2.500 2 2.500H4ZM2.300 8V22.700H20.700V8Z" fill="#000" fillRule="evenodd" /></svg>
                  </CalendarSlot>
                </TextField>
                <TextField label="Gender" ls={-0.34}><Value $ls={-0.72}>Male</Value></TextField>
              </HalfRow>
            </Row>
            <Row>
              <TextField label="Address" ls={-0.53} />
              <TextField label="Contact Number" ls={-0.28} />
            </Row>
            <Row>
              <TextField label="Games U Play" ls={-0.02} strong />
              <TextField label="Other Info" ls={0.12} strong tall>
                <Grip width="15" height="15" viewBox="0 0 15 15"><path d="M1 14 14 1M8 14 14 8" stroke="#444" strokeWidth="1.600" /></Grip>
              </TextField>
            </Row>
            <Actions>
              <Button type="button" $w={134.5} $bg="#f5c243" $fg="#000" $ls={-0.91}>Modify</Button>
              <Button type="button" $w={138} $bg="#418658" $fg="#fff" $ls={-0.37}>Submit</Button>
            </Actions>
          </Card>
        </Page>
      </Window>

      <Dock>
        {dockApps.map((app, i) => (
          <Cell key={i} $running={i === 0 || i === 2}>
            {app}
            {i === 16 && <Badge>1</Badge>}
          </Cell>
        ))}
        <Separator />
        <Cell $running><ChromeApp /></Cell>
        <Cell $running><Workbench /></Cell>
        <Cell $running><Tile $bg="#fff"><VsCodeArt /></Tile></Cell>
        <Separator />
        <Cell><PhotoStack /></Cell>
        <Cell><WindowThumb><CodeThumb /><ThumbBadge><VsCodeArt size={31} /></ThumbBadge></WindowThumb></Cell>
        <Cell><Trash /></Cell>
      </Dock>
    </Desktop>
  );
}
